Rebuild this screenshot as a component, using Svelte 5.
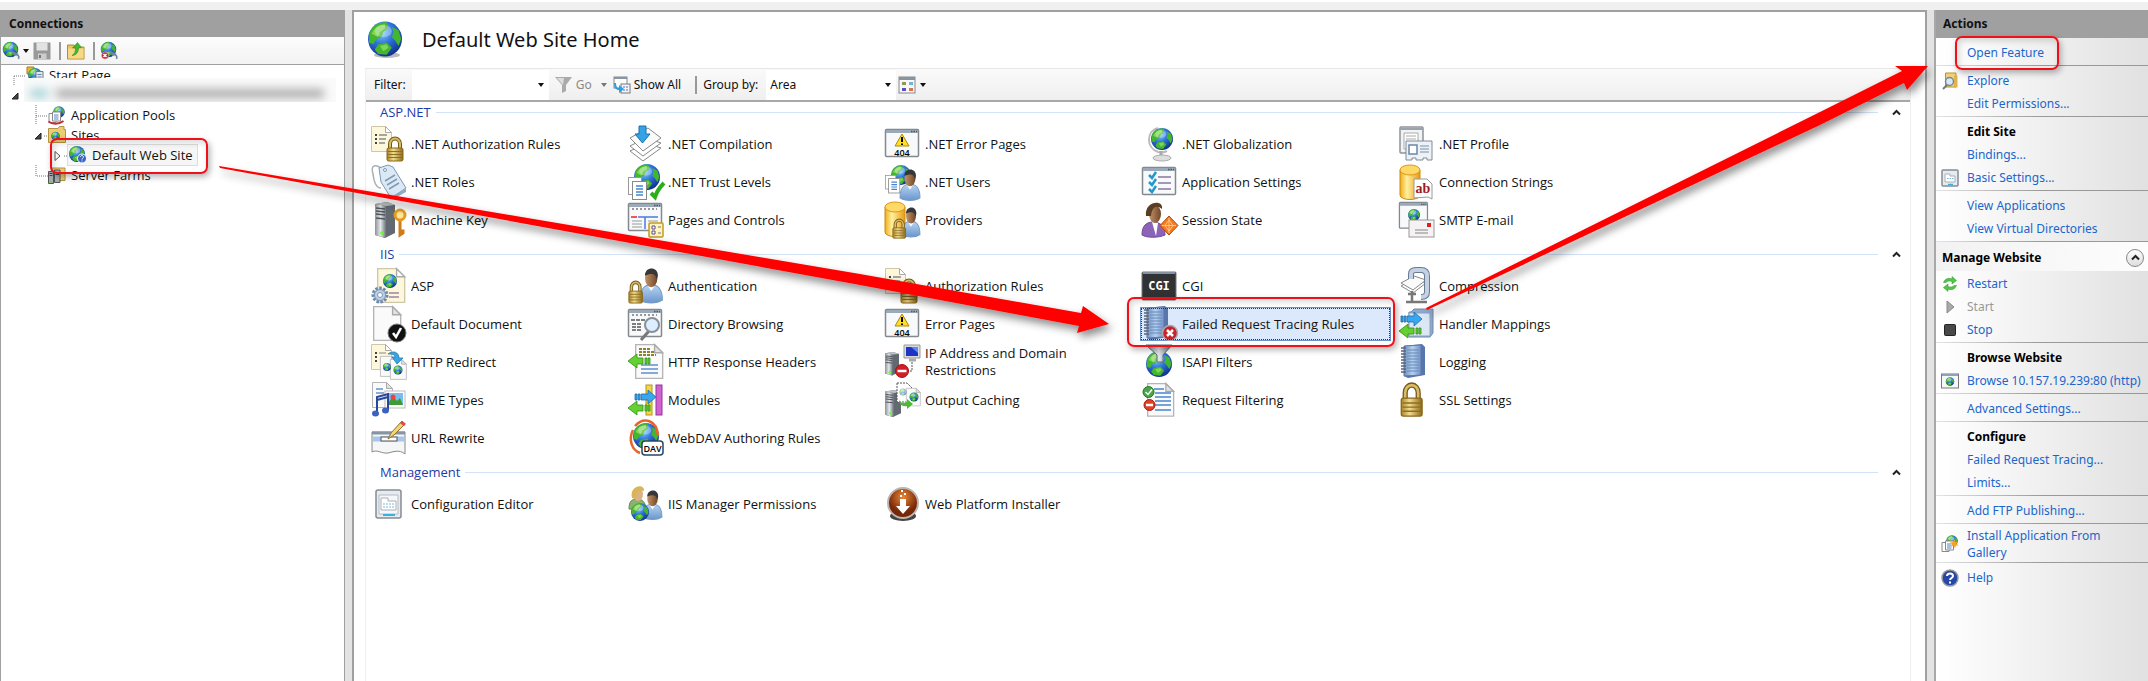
<script>
  const groups = [
    {
      name: 'ASP.NET',
      items: [
        ['authrules', '.NET Authorization Rules'], ['compilation', '.NET Compilation'], ['errorpages', '.NET Error Pages'],
        ['globalization', '.NET Globalization'], ['profile', '.NET Profile'], ['roles', '.NET Roles'],
        ['trust', '.NET Trust Levels'], ['netusers', '.NET Users'], ['appsettings', 'Application Settings'],
        ['connstrings', 'Connection Strings'], ['machinekey', 'Machine Key'], ['pages', 'Pages and Controls'],
        ['providers', 'Providers'], ['session', 'Session State'], ['smtp', 'SMTP E-mail']
      ]
    },
    {
      name: 'IIS',
      items: [
        ['asp', 'ASP'], ['authentication', 'Authentication'], ['authrules', 'Authorization Rules'], ['cgi', 'CGI'],
        ['compression', 'Compression'], ['defaultdoc', 'Default Document'], ['dirbrowse', 'Directory Browsing'],
        ['errorpages', 'Error Pages'], ['failedreq', 'Failed Request Tracing Rules'], ['handlers', 'Handler Mappings'],
        ['redirect', 'HTTP Redirect'], ['headers', 'HTTP Response Headers'], ['ipdomain', 'IP Address and Domain Restrictions'],
        ['isapi', 'ISAPI Filters'], ['logging', 'Logging'], ['mime', 'MIME Types'], ['modules', 'Modules'],
        ['caching', 'Output Caching'], ['reqfilter', 'Request Filtering'], ['ssl', 'SSL Settings'],
        ['rewrite', 'URL Rewrite'], ['webdav', 'WebDAV Authoring Rules']
      ]
    },
    {
      name: 'Management',
      items: [['configeditor', 'Configuration Editor'], ['permissions', 'IIS Manager Permissions'], ['webpi', 'Web Platform Installer']]
    }
  ];
  let selected = $state('Failed Request Tracing Rules');

  const topActions = [
    [{ t: 'Open Feature', ring: true }],
    [{ t: 'Explore', icon: 's-explore' }, { t: 'Edit Permissions...' }],
    [{ t: 'Edit Site', head: true }, { t: 'Bindings...' }, { t: 'Basic Settings...', icon: 's-settings' }],
    [{ t: 'View Applications' }, { t: 'View Virtual Directories' }]
  ];
  const siteActions = [
    [{ t: 'Restart', icon: 's-restart' }, { t: 'Start', icon: 's-start', off: true }, { t: 'Stop', icon: 's-stop' }],
    [{ t: 'Browse Website', head: true }, { t: 'Browse 10.157.19.239:80 (http)', icon: 's-browse' }],
    [{ t: 'Advanced Settings...' }],
    [{ t: 'Configure', head: true }, { t: 'Failed Request Tracing...' }, { t: 'Limits...' }],
    [{ t: 'Add FTP Publishing...' }],
    [{ t: 'Install Application From Gallery', icon: 's-gallery', tall: true }],
    [{ t: 'Help', icon: 's-help' }]
  ];
  const lines = {
    start: 'M1 11V20M1 11H13',
    tee: 'M1 0V20M1 11H13',
    open: 'M9 11H13',
    end: 'M1 0V11H13',
    closed: 'M9 11H13'
  };
</script>

{#snippet icon(id, size)}
  <svg class="ico" width={size} height={size} viewBox="0 0 36 36" aria-hidden="true"><use href="#{id}" /></svg>
{/snippet}

{#snippet joint(kind)}
  <svg class="joint" width="13" height="20" viewBox="0 0 13 20" aria-hidden="true">
    <path d={lines[kind]} fill="none" stroke="#777" stroke-dasharray="1 1" />
    {#if kind === 'open'}<path d="M6 8V14H0Z" fill="#444" stroke="#222" />{/if}
    {#if kind === 'closed'}<path d="M0 6.500V15.500L5 11Z" fill="#fff" stroke="#555" />{/if}
  </svg>
{/snippet}

{#snippet actionGroup(rows)}
  <ul class="acts">
    {#each rows as r}
      <li class:tall={r.tall}>
        <span class="slot">{#if r.icon}{@render icon(r.icon, 18)}{/if}</span>
        {#if r.head}<strong>{r.t}</strong>
        {:else if r.off}<span class="off">{r.t}</span>
        {:else}<a href="#top" class:ring={r.ring}>{r.t}</a>{/if}
      </li>
    {/each}
  </ul>
{/snippet}

<svg class="defs" width="0" height="0" aria-hidden="true">
  <defs>
    <radialGradient id="sea" cx=".4" cy=".3" r=".75"><stop offset="0" stop-color="#8fd4ff" /><stop offset=".45" stop-color="#2f74dc" /><stop offset="1" stop-color="#102a86" /></radialGradient>
    <linearGradient id="gold" x2="1"><stop offset="0" stop-color="#a9842c" /><stop offset=".4" stop-color="#f2dc8c" /><stop offset="1" stop-color="#8c6a1c" /></linearGradient>
    <linearGradient id="yel" x2="1"><stop offset="0" stop-color="#f0ac18" /><stop offset=".35" stop-color="#fff0a0" /><stop offset="1" stop-color="#e89a10" /></linearGradient>
    <linearGradient id="steel" x2="1"><stop offset="0" stop-color="#8c9299" /><stop offset=".5" stop-color="#e4e7ea" /><stop offset="1" stop-color="#6d737a" /></linearGradient>
    <linearGradient id="shirt" y2="1" x2="0"><stop offset="0" stop-color="#b8d6f4" /><stop offset="1" stop-color="#6a96cc" /></linearGradient>
    <linearGradient id="book" x2="1"><stop offset="0" stop-color="#6f8fbf" /><stop offset=".5" stop-color="#b5d0ef" /><stop offset="1" stop-color="#7291c4" /></linearGradient>
    <linearGradient id="skin" x2="1"><stop offset="0" stop-color="#c39468" /><stop offset="1" stop-color="#6f4629" /></linearGradient>
    <radialGradient id="rust" cy=".3"><stop offset="0" stop-color="#e88838" /><stop offset="1" stop-color="#772808" /></radialGradient>
    <filter id="drop" x="-20%" y="-20%" width="140%" height="140%"><feDropShadow dx="3" dy="5" stdDeviation="4" flood-color="#000" flood-opacity=".45" /></filter>

    <g id="globe">
      <circle r="10" fill="url(#sea)" />
      <path d="M-9-4C-7-8-3-10 1-9.500L2-6-1-4-2-1-5 0-7 3-9.500 2ZM4-7 8-5 9.500 0 8 4 6 1 4-1 5-4ZM-4 3 1 2 4 5 1 9-4 8.500-6 6Z" fill="#43b52f" />
      <path d="M-8-3C-6-7-3-8.500 0-8.500L0-6-3-4-4-1ZM-3 4 1 3 2 5-1 7Z" fill="#9be265" opacity=".7" />
      <ellipse cx="-1" cy="-4.500" rx="5" ry="3.500" fill="#fff" opacity=".3" />
    </g>
    <g id="doc"><path d="M.5.5H14.500L20.500 6.500V25.500H.5Z" fill="#fafafa" stroke="#b5b5b5" /><path d="M14.500.5V6.500H20.500Z" fill="#e2e2e2" stroke="#aaa" /></g>
    <g id="creamdoc"><path d="M.5.5H14.500L20.500 6.500V25.500H.5Z" fill="#fdf7dc" stroke="#cfc8a8" /><path d="M14.500.5V6.500H20.500Z" fill="#fff" stroke="#aaa" /></g>
    <g id="lock"><path d="M4 12V7A5 5.500 0 0 1 14 7V12" fill="none" stroke="#75591a" stroke-width="4" /><path d="M4 12V7A5 5.500 0 0 1 14 7V12" fill="none" stroke="#d8bc66" stroke-width="2" /><rect x="1" y="11" width="16" height="13" rx="1.500" fill="url(#gold)" stroke="#896718" /><path d="M2 14.500H16M2 17.500H16M2 20.500H16" stroke="#8f6e22" /></g>
    <g id="person"><path d="M0 25C0 17 4 13 10 13S20 17 20 25C15 28 5 28 0 25Z" fill="url(#shirt)" stroke="#7699c4" /><path d="M7 14 10 18 13 14Z" fill="#fff" /><ellipse cx="10" cy="8" rx="5.500" ry="7" fill="url(#skin)" /><path d="M4.500 6C4-1 16-2 16 6L15 9C14 4 10 4 4.500 6Z" fill="#373737" /></g>
    <g id="win"><rect x=".5" y=".5" width="33" height="27" rx="1" fill="#f8f9fa" stroke="#83898f" stroke-width="1.500" /><path d="M1 2.500H33" stroke="#9ba9b8" stroke-width="3" /><path d="M26 2.500H32" stroke="#4b5967" stroke-width="1.500" stroke-dasharray="1.500 1" /></g>
    <g id="server"><path d="M0 2 12 0 20 3V31L10 36 0 33Z" fill="#626970" /><path d="M0 2 11 4V36L0 33Z" fill="url(#steel)" /><path d="M1 6 10 7M1 9 10 10M1 12 10 13M1 16 10 17" stroke="#4f565c" stroke-width="1.500" /><path d="M0 2 12 0 20 3 11 4Z" fill="#bcc1c5" /><circle cx="7" cy="31" r="1.800" fill="#5dff2c" /></g>
    <g id="right"><path d="M0 4H2V10H0ZM3 4H5V10H3ZM6 4H13V0L21 7 13 14V10H6Z" fill="#3aa6ee" stroke="#1c6dac" stroke-width=".8" /></g>
    <g id="left"><path d="M22 4H20V10H22ZM19 4H17V10H19ZM15 4H9V0L0 7 9 14V10H15Z" fill="#63d12f" stroke="#328f15" stroke-width=".8" /></g>
    <g id="notebook"><path d="M5 2 23 0 26 3V31L9 34 5 32Z" fill="#5876ab" /><path d="M5 2 22 1V31L5 32Z" fill="url(#book)" stroke="#5c79a8" /><path d="M8 6H20M8 9H20M8 12H20M8 15H20M8 18H20M8 21H20M8 24H20M8 27H20" stroke="#6689bb" /><path d="M2 4H7M2 7H7M2 10H7M2 13H7M2 16H7M2 19H7M2 22H7M2 25H7M2 28H7" stroke="#5b6575" stroke-width="1.300" /></g>
    <g id="cyl"><path d="M0 5V30C0 36 20 36 20 30V5Z" fill="url(#yel)" stroke="#cc8b12" /><ellipse cx="10" cy="5" rx="10" ry="5" fill="#ffd968" stroke="#d89818" /></g>
    <g id="pagepair"><rect x=".5" y=".5" width="13" height="17" fill="#fff" stroke="#999" /><rect x="4.500" y="4.500" width="14" height="18" fill="#fff" stroke="#888" /><path d="M8 9H15M8 12H15M8 15H15M8 18H15" stroke="#4685cf" stroke-width="1.500" /></g>

    <g id="authrules"><use href="#creamdoc" /><path d="M4 9H6M4 13H6M4 17H6" stroke="#444" stroke-width="2" /><path d="M8 9H16M8 13H15M8 17H14" stroke="#8a8a8a" stroke-width="1.500" /><use href="#lock" x="15" y="11" /></g>
    <g id="compilation"><path d="M2 25 18 17 33 22 15 35Z" fill="#fff" stroke="#888" /><path d="M2 20 18 12 33 17 15 30Z" fill="#fff" stroke="#888" /><path d="M2 12 20 2 33 12 15 25Z" fill="#fbfbfb" stroke="#888" /><path d="M11 0H18V8H22L14.500 17 7 8H11Z" fill="#33a3e6" stroke="#1a70b0" /></g>
    <g id="errorpages"><use href="#win" y="3" /><path d="M17 8 24 20H10Z" fill="#ffdf27" stroke="#a98c00" stroke-linejoin="round" /><path d="M17 11V16M17 17.500V19" stroke="#000" stroke-width="2" /><text x="17" y="30" text-anchor="middle" font-size="9" font-weight="600">404</text></g>
    <g id="globalization"><path d="M16 2C4 5 4 22 16 26C20 27 23 26 25 25" fill="none" stroke="#bbb" stroke-width="2" /><use href="#globe" transform="translate(20 13) scale(1.100)" /><path d="M19 25V30" stroke="#aaa" stroke-width="3" /><ellipse cx="20" cy="32" rx="9" ry="3" fill="#ddd" stroke="#aaa" /></g>
    <g id="profile"><rect x="1" y="1" width="23" height="26" rx="1" fill="#f2f3f4" stroke="#8d949a" stroke-width="1.500" /><path d="M1 3H24" stroke="#9ba4ad" stroke-width="2" /><path d="M5 7H19V23H5ZM7 10H17M7 13H17" fill="#fff" stroke="#aaa" /><path d="M7 15H33V34H28V32H24V34H17V32H13V34H7Z" fill="#eef2f6" stroke="#7f8b97" /><rect x="10" y="19" width="8" height="9" fill="#fff" stroke="#6a86a8" stroke-width="1.500" /><path d="M21 20H30M21 23H30M21 26H30" stroke="#9fb0c2" stroke-width="1.500" /></g>
    <g id="roles"><path d="M10 4C2-1 0 3 2 10C3 19 6 24 10 24" fill="none" stroke="#aab0b8" stroke-width="1.500" /><path d="M8 4 17 1 22 3 35 24 20 34 10 18Z" fill="#dbe9f6" stroke="#7d98b4" /><path d="M20 34 35 24V28L22 35Z" fill="#8fabc6" /><path d="M14 17 24 11M16 21 26 15M18 25 28 19" stroke="#8299b3" stroke-width="1.500" /><circle cx="14" cy="6" r="1.500" fill="#fff" stroke="#7d98b4" /></g>
    <g id="trust"><use href="#globe" transform="translate(19 13) scale(1.300)" /><use href="#pagepair" y="13" /><path d="M23 29 27 33C29 27 32 23 36 19" fill="none" stroke="#2cae1c" stroke-width="4" /></g>
    <g id="netusers"><use href="#globe" transform="translate(16 11)" /><use href="#pagepair" transform="translate(0 11) scale(.800)" /><use href="#person" transform="translate(15 5) scale(1 1.150)" /></g>
    <g id="appsettings"><use href="#win" y="3" /><path d="M7 11 10 14 14 8M7 18 10 21 14 15M7 25 10 28 14 22" fill="none" stroke="#2398cb" stroke-width="2.500" /><path d="M16 13H29M16 19H29M16 25H29" stroke="#8a76a0" stroke-width="1.500" /></g>
    <g id="connstrings"><use href="#cyl" x="1" y="1" /><path d="M15 15H28L33 20V35L29 33 15 34Z" fill="#fff" stroke="#999" /><text x="24" y="29" text-anchor="middle" font-family="Liberation Serif,serif" font-size="14" font-weight="700" fill="#a01822">ab</text></g>
    <g id="machinekey"><use href="#server" x="4" /><path d="M29 18V33L32 31V29H30" fill="none" stroke="#cf7c18" stroke-width="3" /><circle cx="29" cy="13" r="5" fill="#ffe49a" stroke="#e39a22" stroke-width="3" /></g>
    <g id="pages"><use href="#win" y="1" /><path d="M4 7H29" stroke="#999" stroke-width="2" stroke-dasharray="2 2" /><path d="M3 15H9" stroke="#e22" stroke-width="1.500" /><path d="M10 15H30M17 15V27" stroke="#4b7ae0" stroke-width="1.500" /><path d="M4 19H14M4 22H14M4 25H14M20 19H30" stroke="#999" /><rect x="21" y="21" width="14" height="14" rx="1" fill="#fff3c0" stroke="#c39b20" stroke-width="1.500" /><path d="M24 24H27V27H24ZM24 29H27V32H24Z" fill="#fff" stroke="#5c4a84" /><path d="M30 25H33M30 31H33" stroke="#777" /></g>
    <g id="providers"><use href="#cyl" /><use href="#person" transform="translate(17 5) scale(.900 1.100)" /><use href="#lock" transform="translate(7 17) scale(.800)" /></g>
    <g id="session"><path d="M0 33C0 24 4 20 11 20S23 24 23 33C16 36 5 36 0 33Z" fill="#8b63b8" stroke="#6e4a98" /><path d="M10 20 14 34 16 21Z" fill="#fff" /><ellipse cx="13" cy="12" rx="6" ry="9" fill="url(#skin)" /><path d="M4 14C2-1 22-3 20 7C15 3 10 4 9 14Z" fill="#5a3d22" /><path d="M27 14 36 23.500 27 33 18 23.500Z" fill="#f47b20" stroke="#b5490a" /><path d="M27 18 31 23.500 27 29 23 23.500ZM27 16V31M20 23.500H34" fill="none" stroke="#ffc68a" /></g>
    <g id="smtp"><use href="#win" transform="scale(.850 .950)" /><use href="#globe" transform="translate(15 13) scale(.600)" /><rect x="10" y="18" width="25" height="17" fill="#f5f2f3" stroke="#999" /><rect x="28" y="21" width="4" height="4" fill="#e0201c" /><path d="M16 28H29M16 31H29" stroke="#aaa" stroke-width="1.500" /></g>
    <g id="asp"><use href="#creamdoc" transform="translate(6 0) scale(1.350)" /><use href="#globe" transform="translate(19 13) scale(.700)" /><path d="M18 25H28M18 29H28" stroke="#9b86a6" stroke-width="1.500" /><circle cx="9" cy="27" r="7" fill="#cfdcec" stroke="#6d89a8" stroke-width="3" stroke-dasharray="2.500 1.500" /><circle cx="9" cy="27" r="5.500" fill="#bdd0e6" stroke="#7c97b5" /><circle cx="9" cy="27" r="2.500" fill="#fff" stroke="#7c97b5" /></g>
    <g id="authentication"><use href="#person" transform="translate(12 0) scale(1.120 1.280)" /><use href="#lock" transform="translate(0 13) scale(.850 .920)" /></g>
    <g id="cgi"><rect y="4" width="34" height="28" rx="1" fill="#303234" stroke="#777" /><path d="M1 5H33" stroke="#8492a2" stroke-width="2" /><text x="17" y="22" text-anchor="middle" font-family="DejaVu Sans Mono,monospace" font-size="12" font-weight="700" fill="#fff">CGI</text></g>
    <g id="compression"><path d="M2 18 15 11 27 15 14 25Z" fill="#fff" stroke="#888" /><path d="M2 15 15 8 27 12 14 22Z" fill="#fafafa" stroke="#888" /><path d="M12 11V6Q12 2 17 2H22Q28 2 28 8V24Q28 29 22 29" fill="none" stroke="#687b92" stroke-width="6" /><path d="M12 11V6Q12 2 17 2H22Q28 2 28 8V24Q28 29 22 29" fill="none" stroke="#c3d1e2" stroke-width="4" /><path d="M13 23V34M7 34H28M9 26H17" stroke="#777" stroke-width="2.500" /></g>
    <g id="defaultdoc"><use href="#doc" transform="translate(2 0) scale(1.350)" /><circle cx="26" cy="27" r="9" fill="#111" stroke="#777" /><path d="M22 27 25 31 30 22" fill="none" stroke="#fff" stroke-width="2.500" /></g>
    <g id="dirbrowse"><use href="#win" y="3" /><path d="M4 9H29" stroke="#999" stroke-width="2" stroke-dasharray="2 2" /><path d="M3 14H17M4 18H14M4 21H14M4 24H14" stroke="#555" stroke-width="1.500" stroke-dasharray="4 1" /><path d="M21 25 13 34" stroke="#777" stroke-width="3" /><circle cx="24" cy="19" r="7" fill="#dceeff" stroke="#889099" stroke-width="2" /></g>
    <g id="failedreq"><use href="#notebook" /><circle cx="28" cy="27" r="7.500" fill="#c8222a" stroke="#aaa" stroke-width="1.500" /><path d="M25 24 31 30M31 24 25 30" stroke="#fff" stroke-width="2.500" /></g>
    <g id="handlers"><path d="M12 6 15 3H34V27L31 31H10V6Z" fill="#8fa8cb" stroke="#7188a8" /><rect x="10" y="7" width="21" height="23" fill="#dbe7f5" stroke="#8aa2c3" /><use href="#right" x="2" y="6" /><use href="#left" y="18" /></g>
    <g id="redirect"><use href="#creamdoc" /><path d="M4 9H6M4 13H6M4 17H6" stroke="#444" stroke-width="2" /><path d="M8 9H15" stroke="#888" /><use href="#doc" transform="translate(9 12) scale(.800)" /><use href="#doc" transform="translate(19 15) scale(.800)" /><use href="#globe" transform="translate(16 23) scale(.400)" /><use href="#globe" transform="translate(27 26) scale(.450)" /><path d="M17 10C22 6 28 8 28 14H32L26 20 21 13H24C24 10 20 10 17 10Z" fill="#36a5e2" stroke="#1c70a8" stroke-width=".7" /></g>
    <g id="headers"><use href="#doc" transform="translate(7 0) scale(1.350)" /><path d="M11 5H23M11 8H26M11 11H28" stroke="#8a8432" stroke-width="2" stroke-dasharray="3 1" /><path d="M13 21H30M13 25H30M13 29H30" stroke="#5b90d0" stroke-width="1.500" /><use href="#left" y="10" /></g>
    <g id="ipdomain"><use href="#server" transform="translate(0 8) scale(.700 .650)" /><path d="M19 1H35V14H19Z" fill="#d9dadb" stroke="#999" /><path d="M21 3H33V12H21Z" fill="#1c35c4" /><path d="M26 3H33V9Z" fill="#5d8af0" /><path d="M24 16H31" stroke="#aaa" stroke-width="3" /><path d="M27 18V27H22" fill="none" stroke="#555" stroke-dasharray="2 1" /><circle cx="17" cy="27" r="6.500" fill="#cf1f28" stroke="#a11" /><path d="M12.500 27H21.500" stroke="#fff" stroke-width="2.500" /></g>
    <g id="isapi"><use href="#globe" transform="translate(17 20) scale(1.300)" /><path d="M4 1H30L21 11V18H15V11Z" fill="url(#steel)" stroke="#5a6a7a" /></g>
    <g id="logging"><use href="#notebook" /></g>
    <g id="mime"><use href="#doc" x="1" /><path d="M5 7H12M5 11H13" stroke="#6a93c8" stroke-width="1.500" /><rect x="14" y="9" width="20" height="17" fill="#fff" stroke="#bbb" /><path d="M16 11H32V23H16Z" fill="#79bdf0" /><path d="M16 23 22 14 26 19 29 16 32 23Z" fill="#3e9a35" /><circle cx="22" cy="15" r="2.500" fill="#e43" /><path d="M6 31V15L17 12V28M6 18 17 15" fill="none" stroke="#27479c" stroke-width="2" /><ellipse cx="4.500" cy="31.500" rx="3.500" ry="3" fill="#3c62bd" /><ellipse cx="14.500" cy="28.500" rx="3.500" ry="3" fill="#3c62bd" /></g>
    <g id="modules"><rect x="18" y="3" width="6" height="30" fill="#f2d548" stroke="#b2941a" /><rect x="28" y="3" width="6" height="30" fill="#cf62cf" stroke="#93339a" /><use href="#right" x="7" y="8" /><use href="#left" y="19" /></g>
    <g id="caching"><use href="#server" transform="translate(0 8) scale(.800 .750)" /><path d="M12 1H22L27 6V20H12Z" fill="#fff" stroke="#555" stroke-dasharray="2 1" /><use href="#doc" transform="translate(21 6) scale(.700)" /><use href="#globe" transform="translate(18 10) scale(.350)" opacity=".5" /><use href="#globe" transform="translate(29 15) scale(.450)" /><path d="M14 18C16 22 20 21 22 20V17L28 22 22 27V24C17 25 14 22 14 18Z" fill="#4dba37" /></g>
    <g id="reqfilter"><use href="#doc" transform="translate(5 1) scale(1.300)" /><path d="M12 7H22M13 11H29M13 15H29M13 19H29M13 23H29M13 28H29" stroke="#4a86cc" stroke-width="1.500" /><circle cx="6.500" cy="10" r="5.500" fill="#49a546" stroke="#277526" /><path d="M3.500 10 6 12.500 10 7.500" fill="none" stroke="#fff" stroke-width="1.500" /><circle cx="7.500" cy="23" r="5.500" fill="#e43d24" stroke="#a72210" /><path d="M4 23H11" stroke="#fff" stroke-width="2.500" /></g>
    <g id="ssl"><use href="#lock" transform="translate(1 1) scale(1.300 1.380)" /></g>
    <g id="rewrite"><path d="M1 12H34V34C28 29 22 32 17 33C11 34 6 29 1 32Z" fill="#f5f6f7" stroke="#888" /><path d="M1 13H34" stroke="#8794a2" stroke-width="3" /><path d="M2 19H33" stroke="#a6c6ee" stroke-width="5" /><rect x="10" y="17" width="16" height="4" fill="#fff" stroke="#555" /><path d="M17 19 20 13 31 1 34 4 23 15Z" fill="#f4d276" stroke="#8c7030" /><path d="M30 2 34 5" stroke="#e5484a" stroke-width="3" /></g>
    <g id="webdav"><use href="#globe" transform="translate(18 16) scale(1.300)" /><path d="M7 6C16-4 29 0 30 16M5 10C0 20 4 30 12 33" fill="none" stroke="#e8642a" stroke-width="2.500" /><rect x="14" y="21" width="21" height="14" rx="3" fill="#fff" stroke="#26456c" stroke-width="1.500" /><text x="24.500" y="31.500" text-anchor="middle" font-size="9" font-weight="600">DAV</text></g>
    <g id="configeditor"><rect x="5" y="4" width="25" height="28" rx="2" fill="#e7eaee" stroke="#858c94" stroke-width="1.500" /><path d="M8 9H27V28H8Z" fill="#f6f7f8" stroke="#b4bcc4" /><path d="M10 12H17V15H25V24H10Z" fill="#fff" stroke="#a6b0ba" /><path d="M12 18H23M12 21H23" stroke="#7fb6d8" stroke-dasharray="2 1" /><path d="M12 29H24" stroke="#38b0e0" stroke-width="2" /></g>
    <g id="permissions"><path d="M1 23C1 15 4 13 9 13S18 16 18 24Z" fill="#8cb36b" stroke="#688a4c" /><ellipse cx="10" cy="8" rx="5" ry="7" fill="#deb184" /><path d="M4 12C1-1 17-3 16 5C11 3 8 5 8 13Z" fill="#d8b557" /><use href="#person" transform="translate(15 4) scale(.950 1.080)" /><use href="#globe" transform="translate(12 26) scale(.900)" /></g>
    <g id="webpi"><ellipse cx="18" cy="30" rx="13" ry="5" fill="#444" /><circle cx="18" cy="17" r="15" fill="url(#rust)" stroke="#bdb5b0" stroke-width="2" /><path d="M15 13H21V20H25L18 28 11 20H15Z" fill="#fff" /><path d="M15 10H17M19 8H21M16 5H18" stroke="#fff" stroke-width="2" /></g>

    <g id="s-connect"><use href="#globe" transform="translate(15 15) scale(1.550)" /><path d="M18 19 23 26 28 24ZM24 26C29 25 34 27 31 34" fill="#dde5ea" stroke="#6c8797" stroke-width="3" /></g>
    <g id="s-disconnect"><use href="#s-connect" /><circle cx="8" cy="27" r="7" fill="#c91c25" stroke="#ddd" /><path d="M5 24 11 30M11 24 5 30" stroke="#fff" stroke-width="3" /></g>
    <g id="s-save"><path d="M1 1H35V35H1Z" fill="#999" /><path d="M7 1H29V17H7Z" fill="#e2e2e2" /><path d="M10 23H27V35H10Z" fill="#ccc" /><path d="M14 26V32" stroke="#777" stroke-width="4" /></g>
    <g id="s-up"><path d="M1 6H14L17 10H34V34H1Z" fill="#e9c35c" stroke="#b18c36" stroke-width="2" /><path d="M2 13H33V33H2Z" fill="#f6d987" /><path d="M10 27C16 24 17 18 17 12L11 12 21 1 29 11 23 12C23 21 18 27 10 27Z" fill="#43b72f" stroke="#25831b" /></g>
    <g id="s-start-page"><path d="M2 2H16V16H2Z" fill="#f0b82d" stroke="#a97c12" stroke-width="2" /><use href="#globe" transform="translate(18 18) scale(1.400)" /><path d="M20 11H34V33H20Z" fill="#e2e8f0" stroke="#777" stroke-width="2" /><path d="M23 17H31M23 22H31M23 27H31" stroke="#6782ac" stroke-width="2" /></g>
    <g id="s-apps"><use href="#globe" transform="translate(22 12) scale(1.150)" /><path d="M2 15H16V33H2Z" fill="#fff" stroke="#888" stroke-width="2" /><path d="M9 12H25V30H9Z" fill="#fff" stroke="#888" stroke-width="2" /><path d="M12 18H21M12 22H21M12 26H21" stroke="#5585b9" stroke-width="2" /></g>
    <g id="s-gallery"><use href="#s-apps" /><path d="M27 9 29 14 34 13 31 17 35 21 30 21 28 26 25 21 20 23 22 18 18 15 24 14Z" fill="#f6a32c" /></g>
    <g id="s-pools"><use href="#s-apps" /><path d="M1 31C8 37 22 37 31 30" fill="none" stroke="#c4313a" stroke-width="4" /></g>
    <g id="s-folder"><path d="M1 5H20L23 1H32V7H35V33H1Z" fill="#edcd72" stroke="#b69341" stroke-width="2" /><use href="#globe" transform="translate(15 20) scale(.850)" /></g>
    <g id="s-site"><use href="#globe" transform="translate(16 16) scale(1.600)" /><circle cx="26" cy="25" r="9" fill="#3763c2" stroke="#fff" stroke-width="2" /><path d="M23 22C23 18 29 18 29 22C29 24 26 24 26 27M26 29V31" fill="none" stroke="#fff" stroke-width="2" /></g>
    <g id="s-farm"><path d="M8 4H34V29H8Z" fill="#edcd72" stroke="#b69341" stroke-width="2" /><path d="M1 11H11V35H1ZM13 8H24V33H13Z" fill="#a8adb2" stroke="#555" stroke-width="2" /><path d="M3 15H9M3 19H9M15 13H22M15 17H22" stroke="#444" stroke-width="2" /><path d="M4 32H8" stroke="#4fe22c" stroke-width="3" /></g>
    <g id="s-explore"><path d="M9 2H30V30H9Z" fill="#f3d277" stroke="#b89338" stroke-width="2" /><path d="M26 7H33V31H26Z" fill="#dfb548" /><path d="M14 24 4 34" stroke="#777" stroke-width="4" /><circle cx="17" cy="19" r="8" fill="#d4e8f8" stroke="#76889a" stroke-width="3" /></g>
    <g id="s-restart"><path d="M5 15C8 7 16 5 22 8V3L31 11 22 18V13C17 11 12 12 10 15ZM31 21C28 29 20 31 14 28V33L5 25 14 18V23C19 25 24 24 26 21Z" fill="#51c649" stroke="#2b9628" /></g>
    <g id="s-start"><path d="M12 6 26 18 12 30Z" fill="#aaa" stroke="#888" stroke-width="2" /></g>
    <g id="s-stop"><rect x="7" y="7" width="22" height="22" rx="2" fill="#484848" stroke="#222" stroke-width="2" /></g>
    <g id="s-browse"><rect x="1" y="4" width="34" height="28" fill="#f6f7f8" stroke="#777" stroke-width="2" /><path d="M2 6H34" stroke="#8fa2b6" stroke-width="4" /><use href="#globe" transform="translate(18 19) scale(.850)" /></g>
    <g id="s-settings"><rect x="2" y="2" width="32" height="32" rx="2" fill="#e7eaee" stroke="#858c94" stroke-width="3" /><path d="M8 10H18V14H28V26H8Z" fill="#fff" stroke="#a6b0ba" stroke-width="2" /><path d="M12 19H25" stroke="#7fb6d8" stroke-width="2" stroke-dasharray="3 2" /><path d="M14 31H24" stroke="#38b0e0" stroke-width="3" /></g>
    <g id="s-help"><circle cx="18" cy="18" r="16" fill="#2547a8" stroke="#999" stroke-width="3" /><path d="M12 14C12 7 24 7 24 14C24 18 18 18 18 22M18 25V29" fill="none" stroke="#fff" stroke-width="4" /></g>
  </defs>
</svg>

<div class="app" id="top">
  <div class="strip"></div>
  <div class="body">
    <aside class="left">
      <h2>Connections</h2>
      <div class="tools">
        <button aria-label="Connect">{@render icon('s-connect', 18)}</button><i class="caret"></i>
        <button aria-label="Save">{@render icon('s-save', 18)}</button><i class="bar"></i>
        <button aria-label="Up">{@render icon('s-up', 18)}</button><i class="bar"></i>
        <button aria-label="Disconnect">{@render icon('s-disconnect', 18)}</button>
      </div>
      <div class="tree">
        <div class="node">{@render joint('start')}{@render icon('s-start-page', 18)}<span>Start Page</span></div>
        <div class="masked">
          <svg width="13" height="20" aria-hidden="true"><path d="M7 13V19H1Z" fill="#444" stroke="#222" /></svg>
          <div class="smudge"><i class="teal"></i><i class="grey"></i></div>
        </div>
        <div class="node l1">{@render joint('tee')}{@render icon('s-pools', 18)}<span>Application Pools</span></div>
        <div class="node l1">{@render joint('open')}{@render icon('s-folder', 18)}<span>Sites</span></div>
        <div class="node l2">{@render joint('closed')}<button class="site ring">{@render icon('s-site', 18)}<span>Default Web Site</span></button></div>
        <div class="node l1">{@render joint('end')}{@render icon('s-farm', 18)}<span>Server Farms</span></div>
      </div>
    </aside>

    <main>
      <header>
        <svg width="36" height="38" viewBox="0 0 36 38" aria-hidden="true"><ellipse cx="20" cy="34" rx="13" ry="3" fill="#bbb" /><use href="#globe" transform="translate(18 18) scale(1.700 1.750)" /></svg>
        <h1>Default Web Site Home</h1>
      </header>
      <div class="content">
        <div class="filterbar">
          <label for="filter">Filter:</label>
          <span class="combo"><input id="filter" type="text" /><i class="caret"></i></span>
          <button class="go" disabled>
            <svg width="18" height="18" viewBox="0 0 18 18" aria-hidden="true"><path d="M0 1H17L11 9V15L7 17V9Z" fill="#aaa" /><path d="M2 2H9L8 9Z" fill="#ddd" /></svg>Go
          </button>
          <i class="caret dim"></i>
          <button class="show">
            <svg width="18" height="18" viewBox="0 0 18 18" aria-hidden="true"><rect x="1" y="1" width="13" height="11" fill="#fff" stroke="#888" /><path d="M1 2H14" stroke="#8895a5" stroke-width="2" /><rect x="8" y="8" width="9" height="9" fill="#f3f5fa" stroke="#777" /><path d="M10 11H16M10 14H16" stroke="#5870c0" stroke-dasharray="2 1" /><path d="M1 7C1 12 3 14 6 14V17L11 13 6 9V12C4 12 3 10 3 7Z" fill="#2c9fe0" /></svg>Show All
          </button>
          <i class="bar"></i>
          <label for="groupby">Group by:</label>
          <span class="combo area"><select id="groupby"><option>Area</option><option>Category</option><option>No Grouping</option></select><i class="caret"></i></span>
          <button class="view" aria-label="View">
            <svg width="18" height="18" viewBox="0 0 18 18" aria-hidden="true"><rect x="1" y="1" width="16" height="16" fill="#f7f7f7" stroke="#888" /><path d="M1 2.500H17" stroke="#8794a2" stroke-width="3" /><path d="M4 6H8V9H4Z" fill="#8b9b4f" /><path d="M11 6H15V9H11Z" fill="#6eb5d6" /><path d="M4 12H8V15H4Z" fill="#5a4fc0" /><path d="M11 12H15V15H11Z" fill="#d8744f" /></svg><i class="caret"></i>
          </button>
        </div>
        {#each groups as g}
          <section>
            <div class="ghead"><h3>{g.name}</h3><hr />
              <button aria-label="Collapse {g.name}"><svg width="9" height="7" viewBox="0 0 9 7" aria-hidden="true"><path d="M1 5.500 4.500 2 8 5.500" fill="none" stroke="#222" stroke-width="2" /></svg></button>
            </div>
            <div class="grid">
              {#each g.items as [id, name]}
                <button class="feature" class:selected={selected === name} class:ring={name === 'Failed Request Tracing Rules'} onclick={() => (selected = name)}>
                  {@render icon(id, 36)}<span>{name}</span>
                </button>
              {/each}
            </div>
          </section>
        {/each}
      </div>
    </main>

    <aside class="right">
      <h2>Actions</h2>
      {#each topActions as rows}{@render actionGroup(rows)}{/each}
      <div class="manage"><h3>Manage Website</h3>
        <button aria-label="Collapse Manage Website"><svg width="9" height="7" viewBox="0 0 9 7" aria-hidden="true"><path d="M1 5.500 4.500 2 8 5.500" fill="none" stroke="#222" stroke-width="2" /></svg></button>
      </div>
      <div class="sitegroups">{#each siteActions as rows}{@render actionGroup(rows)}{/each}</div>
    </aside>
  </div>
  <svg class="arrows" aria-hidden="true">
    <g fill="#f00" filter="url(#drop)">
      <path d="M219 166 220 168 860 285 1079 326 1077 333 1109 324 1083 306 1081 313 860 274Z" />
      <path d="M1426 308 1427 310 1820 125 1904 83 1907 90 1928 66 1895 66 1902 71 1820 112Z" />
    </g>
  </svg>
</div>

<style>
  :global(body) { margin: 0; background: #fff; }
  .app { position: relative; display: flex; flex-direction: column; min-height: 100vh; overflow: hidden; background: #f0f0f0; font: 12px/16px "Noto Sans", "Open Sans", sans-serif; color: #111; }
  .app * { box-sizing: border-box; }
  .defs { position: absolute; }
  h1, h2, h3, ul { margin: 0; padding: 0; font-weight: 400; list-style: none; }
  button { border: 0; padding: 0; background: none; font: inherit; color: inherit; display: flex; align-items: center; text-align: left; }
  .ico, .joint { flex: none; display: block; overflow: visible; }
  .strip { height: 10px; border-top: 2px solid #fff; background: #f0f0f0; }
  .body { flex: 1; display: grid; grid-template-columns: 345px minmax(0, 1fr) 214px; column-gap: 7px; background: #e3e3e3; }
  .caret { flex: none; width: 0; height: 0; border: 3px solid transparent; border-top: 4px solid #111; border-bottom: 0; }
  .caret.dim { border-top-color: #777; }
  .bar { flex: none; width: 2px; height: 18px; background: #999; }

  h2 { height: 27px; padding: 0 8px; background: #a0a0a0; font-size: 12px; line-height: 28px; font-weight: 700; }
  .left { background: #fff; border: 1px solid #a0a0a0; border-top-width: 0; border-bottom: 0; }
  .tools { display: flex; align-items: center; gap: 4px; height: 28px; padding-left: 2px; border-bottom: 1px solid #a0a0a0; background: linear-gradient(#fcfcfc, #f3f3f3); }
  .tools .caret { margin-left: -2px; }
  .tools .bar { margin: 0 2px 0 4px; }
  .node { display: flex; align-items: center; gap: 5px; height: 20px; padding-left: 12px; font-family: "Open Sans", "Noto Sans", sans-serif; font-size: 13px; }
  .node .joint { margin-right: -5px; }
  .l1 { padding-left: 34px; }
  .l2 { padding-left: 54px; }
  .masked { position: relative; display: flex; align-items: center; height: 24px; margin: -7px 8px 3px 10px; }
  .smudge { flex: 1; height: 24px; overflow: hidden; display: flex; align-items: center; gap: 8px; padding: 6px 12px 0 6px; background: #fafafa; }
  .smudge i { height: 9px; filter: blur(5px); }
  .teal { width: 18px; background: #a5d3d7; }
  .grey { flex: 1; background: #aaa; }
  .ring { position: relative; }
  .ring::after { content: ""; position: absolute; inset: -10px -12px; border: 2px solid #f0101a; border-radius: 7px; box-shadow: 2px 3px 6px rgba(0, 0, 0, .3), inset 2px 3px 6px rgba(0, 0, 0, .15); pointer-events: none; }
  .site { gap: 5px; height: 20px; padding: 0 4px 0 1px; background: #f6f6f6; outline: 1px solid #ddd; }
  .site.ring::after { inset: -7px -11px -9px -18px; }

  main { display: flex; flex-direction: column; background: #fff; border: 1px solid #a0a0a0; border-width: 2px 2px 0; padding-left: 11px; }
  header { display: flex; align-items: center; gap: 19px; height: 56px; padding: 0 0 0 2px; }
  h1 { font-size: 20px; line-height: 28px; }
  .content { flex: 1; margin-right: 14px; border: 1px solid #eee; border-width: 0 1px; }
  .filterbar { display: flex; align-items: center; height: 34px; padding-left: 8px; border-top: 1px solid #e6e6e6; border-bottom: 2px solid #a8a8a8; background: linear-gradient(#fafafa, #efefef); }
  .combo { position: relative; display: flex; align-items: center; width: 137px; height: 30px; margin: 0 6px; background: #fff; }
  .combo.area { width: 130px; margin: 0 2px 0 8px; }
  .combo .caret { position: absolute; right: 5px; pointer-events: none; }
  input, select { width: 100%; height: 100%; border: 0; padding: 0 4px; background: transparent; font: inherit; color: inherit; appearance: none; outline: 0; }
  .go { gap: 3px; color: #8a8a8a; margin-right: 9px; }
  .show { gap: 3px; margin: 0 14px 0 6px; }
  .show + .bar { margin-right: 6px; }
  .view { gap: 4px; }
  .ghead { display: flex; align-items: center; gap: 5px; height: 20px; padding: 0 9px 0 14px; color: #1c3aa9; }
  .ghead h3 { font-family: "Open Sans", "Noto Sans", sans-serif; font-size: 13px; }
  .ghead hr { flex: 1; margin: 0 9px 0 0; border: 0; border-top: 1px solid #d4e2f7; }
  .grid { display: grid; grid-template-columns: repeat(5, 257px); padding: 3px 0 5px 3px; }
  .feature { height: 38px; width: 251px; gap: 4px; padding-left: 2px; font-family: "Open Sans", "Noto Sans", sans-serif; font-size: 13px; line-height: 17px; }
  .feature span { max-width: 170px; }
  .feature.ring span { max-width: none; }
  .feature.selected { height: 34px; margin: 2px 0; background: #dce9fc; border: 1px solid #6d94cc; outline: 1px dotted #333; outline-offset: -2px; padding-left: 1px; }
  .feature.ring::after { inset: -11px -5px -7px -14px; }

  .right { background: linear-gradient(90deg, #fff, #e1e1e1); border-left: 2px solid #a8a8a8; }
  .right h2 { height: 28px; padding-left: 7px; }
  .acts { padding: 3px 0 1px; border-bottom: 1px solid #a5a5a5; border-image: linear-gradient(90deg, #e5e5e5, #999 50%) 1; }
  .acts li { display: flex; align-items: center; height: 23px; }
  .acts li.tall { height: 34px; line-height: 17px; }
  .acts li.tall a { max-width: 160px; }
  .acts:last-child { border: 0; }
  .slot { flex: none; width: 31px; padding-left: 5px; }
  .acts a { color: #1a66cc; text-decoration: none; }
  .acts a.ring::after { inset: -9px -15px -9px -12px; }
  .off { color: #999; }
  strong, .manage h3 { font-size: 12px; font-weight: 700; color: #000; }
  .manage { display: flex; align-items: center; justify-content: space-between; height: 29px; padding: 2px 4px 0 6px; background: linear-gradient(90deg, #f2f2f2, #fdfdfd); }
  .manage button { justify-content: center; width: 18px; height: 18px; border: 1px solid #888; border-radius: 50%; background: linear-gradient(#fff, #ddd); }
  .sitegroups .acts:first-child { padding-top: 1px; }
  .arrows { position: absolute; inset: 0; width: 100%; height: 100%; pointer-events: none; }
</style>
